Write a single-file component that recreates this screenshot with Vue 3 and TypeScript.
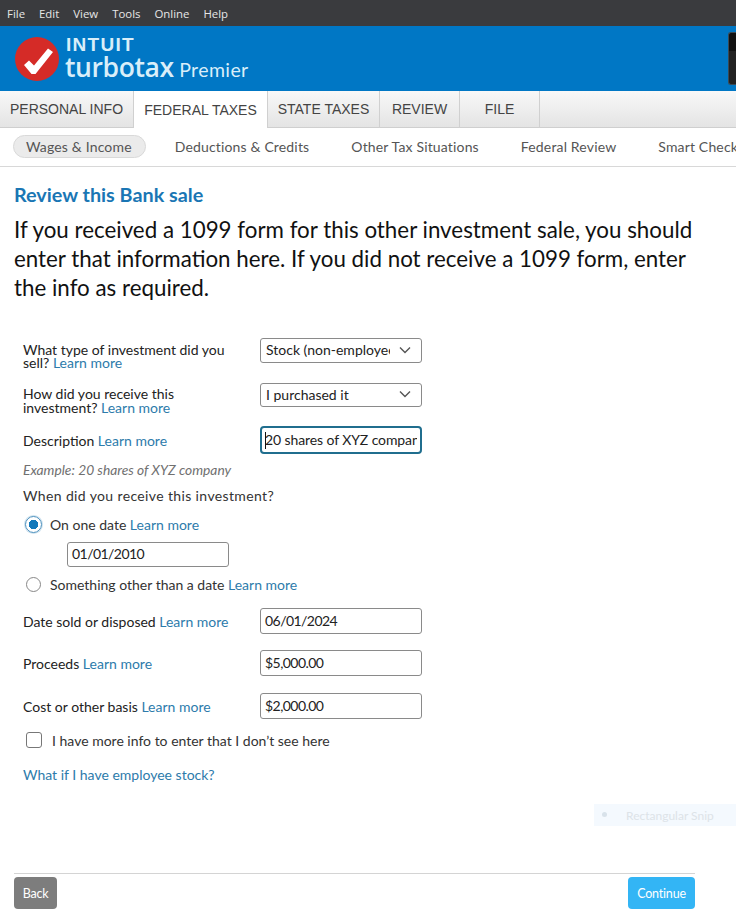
<script setup lang="ts">
interface Row {
  label: string;
  value: string;
}

const menus: string[] = ["File", "Edit", "View", "Tools", "Online", "Help"];
const tabs: string[] = ["PERSONAL INFO", "FEDERAL TAXES", "STATE TAXES", "REVIEW", "FILE"];
const subnav: string[] = ["Wages & Income", "Deductions & Credits", "Other Tax Situations", "Federal Review", "Smart Check"];

const amountRows: Row[] = [
  { label: "Date sold or disposed", value: "06/01/2024" },
  { label: "Proceeds", value: "$5,000.00" },
  { label: "Cost or other basis", value: "$2,000.00" },
];
</script>

<template>
  <div class="page">
    <div class="menubar">
      <span v-for="m in menus" :key="m">{{ m }}</span>
    </div>

    <header class="brand">
      <svg class="logo" width="46" height="46" viewBox="0 0 46 46">
        <circle cx="23" cy="23" r="22" fill="#d52b27" />
        <path d="M10 29 L15 24.5 L20 29.5 L34 12.5 L39 16 L21.5 38 L17.5 38 Z" fill="#fff" />
      </svg>
      <div class="wordmark">
        <div class="intuit">INTUIT</div>
        <div class="turbotax">turbotax <span>Premier</span></div>
      </div>
      <div class="blackbox"></div>
    </header>

    <nav class="tabs">
      <div v-for="(t, i) in tabs" :key="t" class="tab" :class="{ active: i === 1 }">{{ t }}</div>
    </nav>

    <nav class="subnav">
      <span v-for="(s, i) in subnav" :key="s" :class="{ pill: i === 0 }">{{ s }}</span>
    </nav>

    <main class="content">
      <h2>Review this Bank sale</h2>
      <p class="lead">If you received a 1099 form for this other investment sale, you should enter that information here. If you did not receive a 1099 form, enter the info as required.</p>

      <form class="form" @submit.prevent>
        <div class="row first">
          <label>What type of investment did you sell? <a>Learn more</a></label>
          <div class="select">
            <span class="clip">Stock (non-employee</span>
            <svg width="12" height="8" viewBox="0 0 12 8"><path d="M1 1.5 L6 6.5 L11 1.5" fill="none" stroke="#555" stroke-width="1.4" /></svg>
          </div>
        </div>
        <div class="row second">
          <label>How did you receive this investment? <a>Learn more</a></label>
          <div class="select short">
            <span class="clip">I purchased it</span>
            <svg width="12" height="8" viewBox="0 0 12 8"><path d="M1 1.5 L6 6.5 L11 1.5" fill="none" stroke="#555" stroke-width="1.4" /></svg>
          </div>
        </div>
        <div class="row third">
          <label>Description <a>Learn more</a></label>
          <div class="box focused"><i class="caret"></i><span class="clip">20 shares of XYZ company</span></div>
        </div>
        <div class="example">Example: 20 shares of XYZ company</div>
        <div class="question">When did you receive this investment?</div>

        <div class="radio-line one">
          <span class="radio on"></span>
          <span>On one date <a>Learn more</a></span>
        </div>
        <div class="box datebox"><span class="num">01/01/2010</span></div>
        <div class="radio-line two">
          <span class="radio"></span>
          <span>Something other than a date <a>Learn more</a></span>
        </div>

        <div class="amounts">
          <div v-for="r in amountRows" :key="r.label" class="row">
            <label>{{ r.label }} <a>Learn more</a></label>
            <div class="box"><span class="num">{{ r.value }}</span></div>
          </div>
        </div>

        <div class="check-line">
          <span class="check"></span>
          <span>I have more info to enter that I don’t see here</span>
        </div>
        <a class="employee">What if I have employee stock?</a>
      </form>
    </main>

    <footer class="footer">
      <button class="back">Back</button>
      <button class="continue">Continue</button>
    </footer>

    <div class="snip"><i></i>Rectangular Snip</div>
  </div>
</template>

<style>
html,
body {
  margin: 0;
  background: #fff;
}
</style>

<style scoped>
.page {
  position: relative;
  width: 736px;
  height: 922px;
  overflow: hidden;
  font-family: Lato, "Open Sans", sans-serif;
  color: #222;
  background: #fff;
}

.menubar {
  height: 26px;
  background: #3a3b3e;
  display: flex;
  align-items: center;
  gap: 14px;
  padding-left: 7px;
  font-family: "Open Sans", sans-serif;
  font-size: 11.4px;
  color: #e6e6e6;
}

.brand {
  position: relative;
  height: 65px;
  background: #0077c5;
  display: flex;
  align-items: center;
  padding-left: 14px;
  gap: 5px;
  color: #d9eef9;
}

.logo {
  flex: none;
}

.wordmark {
  padding-top: 4px;
}

.intuit {
  font-family: "Liberation Sans", sans-serif;
  font-weight: 700;
  font-size: 19px;
  line-height: 18px;
  letter-spacing: 1.3px;
  padding-left: 1px;
  margin-bottom: -2px;
}

.turbotax {
  font-family: "Open Sans", sans-serif;
  font-weight: 600;
  font-size: 26.5px;
  line-height: 30px;
  letter-spacing: -0.4px;
  white-space: nowrap;
}

.turbotax span {
  font-family: Lato, sans-serif;
  font-weight: 400;
  font-size: 19.5px;
  letter-spacing: 0.4px;
  margin-left: -1px;
}

.blackbox {
  position: absolute;
  right: 0;
  top: 6px;
  width: 8px;
  height: 53px;
  box-sizing: border-box;
  border-radius: 3px 0 0 3px;
  border: 1px solid #3a4a55;
  border-right: 0;
  background: linear-gradient(#111 0 18px, #222 18px);
}

.tabs {
  height: 37px;
  display: flex;
  background: linear-gradient(#f8f8f8, #e4e4e4);
  border-bottom: 1px solid #cfcfcf;
  box-sizing: border-box;
  font-family: "Liberation Sans", sans-serif;
  font-size: 14px;
  color: #444;
}

.tab {
  width: 80px;
  height: 37px;
  line-height: 36px;
  box-sizing: border-box;
  border-right: 1px solid #d0d0d0;
  text-align: center;
  white-space: nowrap;
}

.tab:nth-child(1) {
  width: 133px;
  border-right: 0;
}

.tab:nth-child(3) {
  width: 112px;
}

.tab.active {
  width: 135px;
  background: #fff;
  border-left: 1px solid #d0d0d0;
  line-height: 38px;
}

.subnav {
  height: 39px;
  box-sizing: border-box;
  display: flex;
  align-items: center;
  gap: 42px;
  padding: 0 0 1px 13px;
  border-bottom: 1px solid #d8d8d8;
  font-size: 14px;
  letter-spacing: 0.16px;
  color: #555;
  white-space: nowrap;
  overflow: hidden;
}

.subnav .pill {
  background: #ebebeb;
  border: 1px solid #d9d9d9;
  border-radius: 12px;
  height: 23px;
  line-height: 21px;
  box-sizing: border-box;
  padding: 0 13px 0 12px;
  margin-right: -13px;
}

.content {
  padding: 15px 0 0 14px;
}

h2 {
  margin: 0;
  font-size: 19.8px;
  line-height: 24px;
  font-weight: 700;
  color: #1a76b4;
}

.lead {
  margin: 9px 0 0;
  width: 690px;
  font-size: 22.35px;
  line-height: 29px;
  color: #111;
}

.form {
  margin: 0;
  padding: 36px 0 0 9px;
  font-size: 14px;
}

a {
  color: #2d7bab;
}

.row {
  display: grid;
  grid-template-columns: 237px 162px;
  align-items: center;
}

.row label {
  padding-right: 20px;
}

.row.first,
.row.second {
  align-items: start;
}

.row.first label {
  line-height: 13px;
  padding-top: 5px;
}

.row.second {
  margin-top: 14px;
}

.row.second label {
  line-height: 14px;
  padding-top: 4px;
}

.row.third {
  margin-top: 11px;
}

.select,
.box {
  height: 26px;
  box-sizing: border-box;
  border: 1px solid #8a8a8a;
  border-radius: 3px;
  background: #fff;
  display: flex;
  align-items: center;
  padding: 0 4px 2px;
  white-space: nowrap;
  color: #222;
}

.select {
  height: 25px;
  justify-content: space-between;
  padding: 0 10px 2px 5px;
}

.select.short {
  height: 24px;
}

.clip {
  flex: 1;
  min-width: 0;
  overflow: hidden;
}

.select .clip {
  flex: none;
  width: 124px;
}

.num {
  letter-spacing: -0.55px;
}

.box.focused {
  position: relative;
  height: 28px;
  border: 2px solid #206e8e;
  padding: 0 3px 1px;
  border-radius: 4px;
  letter-spacing: -0.1px;
}

.caret {
  position: absolute;
  left: 3px;
  top: 4px;
  width: 1px;
  height: 17px;
  background: #111;
}

.example {
  margin-top: 8px;
  font-size: 13.8px;
  font-style: italic;
  line-height: 16px;
  color: #707070;
}

.question {
  margin-top: 9px;
  line-height: 18px;
  color: #333;
  letter-spacing: 0.37px;
}

.radio-line {
  display: flex;
  align-items: center;
  gap: 9px;
  padding-left: 3px;
  height: 18px;
  color: #333;
}

.radio-line.one {
  margin-top: 10px;
}

.radio-line.two {
  margin-top: 8px;
}

.radio {
  width: 15px;
  height: 15px;
  box-sizing: border-box;
  border: 1px solid #888;
  border-radius: 50%;
  background: #fff;
}

.radio.on {
  width: 17px;
  height: 17px;
  margin: 0 -1px;
  border: 1px solid #4a8fbd;
  background: radial-gradient(circle, #1479bb 0 4.5px, #fff 5px);
  box-shadow: 0 0 0 1px #cfe2ee;
}

.datebox {
  width: 162px;
  margin: 9px 0 0 44px;
  height: 25px;
}

.amounts {
  margin-top: 15px;
  display: flex;
  flex-direction: column;
  gap: 16px;
}

.amounts .row:nth-child(2) {
  margin-bottom: 1px;
}

.check-line {
  display: flex;
  align-items: center;
  gap: 10px;
  margin: 12px 0 0 3px;
  height: 18px;
  color: #333;
}

.check {
  width: 16px;
  height: 16px;
  box-sizing: border-box;
  border: 1px solid #777;
  border-radius: 3px;
  background: #fff;
}

.employee {
  display: block;
  margin-top: 17px;
  line-height: 18px;
}

.footer {
  position: absolute;
  left: 14px;
  top: 873px;
  width: 681px;
  box-sizing: border-box;
  border-top: 1px solid #d4d4d4;
  padding-top: 3px;
  display: flex;
  justify-content: space-between;
}

.footer button {
  height: 32px;
  border: none;
  border-radius: 4px;
  color: #fff;
  font-family: Lato, sans-serif;
  font-size: 12.5px;
  letter-spacing: -0.2px;
  padding: 0;
}

.back {
  width: 43px;
  background: #7d7d7d;
}

.continue {
  width: 67px;
  background: #33b5f5;
}

.snip {
  position: absolute;
  left: 594px;
  top: 804px;
  width: 142px;
  height: 22px;
  display: flex;
  align-items: center;
  padding-left: 32px;
  box-sizing: border-box;
  background: #f4f9fe;
  font-size: 12px;
  color: #dde3e8;
}

.snip i {
  position: absolute;
  left: 8px;
  top: 8px;
  width: 5px;
  height: 5px;
  border-radius: 50%;
  background: #d8e2ea;
}
</style>
